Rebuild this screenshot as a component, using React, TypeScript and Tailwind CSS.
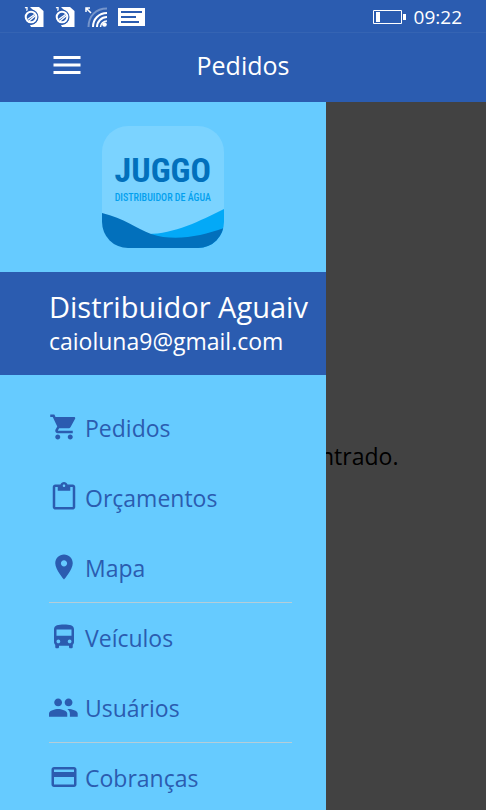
import type { ReactNode } from "react";

function Glyph({ viewBox, children }: { viewBox: string; children: ReactNode }) {
  return (
    <svg viewBox={viewBox} className="mb-[2px] size-[30px] shrink-0 fill-current" aria-hidden="true">
      {children}
    </svg>
  );
}

const items = [
  {
    label: "Pedidos",
    divider: false,
    viewBox: "0 0 24 24",
    path: "M7 18c-1.1 0-1.99.9-1.99 2S5.9 22 7 22s2-.9 2-2-.9-2-2-2zM1 2v2h2l3.6 7.59-1.35 2.45c-.16.28-.25.61-.25.96 0 1.1.9 2 2 2h12v-2H7.42c-.14 0-.25-.11-.25-.25l.03-.12.9-1.63h7.45c.75 0 1.41-.41 1.75-1.03l3.58-6.49c.08-.14.12-.31.12-.48 0-.55-.45-1-1-1H5.21l-.94-2H1zm16 16c-1.1 0-1.99.9-1.99 2s.89 2 1.99 2 2-.9 2-2-.9-2-2-2z",
  },
  {
    label: "Orçamentos",
    divider: false,
    viewBox: "0 0 24 24",
    path: "M19 2h-4.18C14.4.84 13.3 0 12 0c-1.3 0-2.4.84-2.82 2H5c-1.1 0-2 .9-2 2v16c0 1.1.9 2 2 2h14c1.1 0 2-.9 2-2V4c0-1.1-.9-2-2-2zm-7 0c.55 0 1 .45 1 1s-.45 1-1 1-1-.45-1-1 .45-1 1-1zm7 18H5V4h2v3h10V4h2v16z",
  },
  {
    label: "Mapa",
    divider: true,
    viewBox: "0 0 24 24",
    path: "M12 2C8.13 2 5 5.13 5 9c0 5.25 7 13 7 13s7-7.75 7-13c0-3.87-3.13-7-7-7zm0 9.500c-1.38 0-2.500-1.120-2.500-2.500s1.120-2.500 2.500-2.500 2.500 1.120 2.500 2.500-1.120 2.500-2.500 2.500z",
  },
  {
    label: "Veículos",
    divider: false,
    viewBox: "0 0 24 24",
    path: "M4 16c0 .88.39 1.67 1 2.22V20c0 .55.45 1 1 1h1c.55 0 1-.45 1-1v-1h8v1c0 .55.45 1 1 1h1c.55 0 1-.45 1-1v-1.780c.61-.55 1-1.340 1-2.220V6c0-3.500-3.580-4-8-4s-8 .500-8 4v10zm3.500 1c-.83 0-1.500-.67-1.500-1.500S6.670 14 7.500 14s1.500.67 1.500 1.500S8.330 17 7.500 17zm9 0c-.83 0-1.500-.67-1.500-1.500s.67-1.500 1.500-1.500 1.500.67 1.500 1.500-.67 1.500-1.500 1.500zm1.500-6H6V6h12v5z",
  },
  {
    label: "Usuários",
    divider: true,
    viewBox: "1 0 23 23",
    path: "M16 11c1.660 0 2.990-1.340 2.990-3S17.660 5 16 5c-1.660 0-3 1.340-3 3s1.340 3 3 3zm-8 0c1.660 0 2.990-1.340 2.990-3S9.660 5 8 5C6.340 5 5 6.340 5 8s1.340 3 3 3zm0 2c-2.330 0-7 1.170-7 3.500V19h14v-2.500c0-2.330-4.670-3.500-7-3.500zm8 0c-.29 0-.62.02-.97.05 1.160.84 1.970 1.970 1.970 3.450V19h6v-2.500c0-2.330-4.670-3.500-7-3.500z",
  },
  {
    label: "Cobranças",
    divider: false,
    viewBox: "0 0 24 24",
    path: "M20 4H4c-1.110 0-1.990.89-1.990 2L2 18c0 1.110.89 2 2 2h16c1.110 0 2-.89 2-2V6c0-1.110-.89-2-2-2zm0 14H4v-6h16v6zm0-10H4V6h16v2z",
  },
];

function SimIcon() {
  return (
    <svg viewBox="0 0 20 20" className="size-5" aria-hidden="true">
      <path d="M6 0h9l4.500 4v16H7l-1-2c8 0 11-9 4-14z" fill="white" />
      <path d="M1 1l2-1v4" fill="none" stroke="white" strokeWidth="1.300" />
      <circle cx="7" cy="10" r="7.500" fill="#2b5cb0" />
      <circle cx="7" cy="10" r="5.300" fill="none" stroke="white" strokeWidth="2" />
      <path d="M3.500 12.500l7-5M5 14l6-5" stroke="white" strokeWidth="1.300" />
    </svg>
  );
}

function StatusBar() {
  return (
    <div className="flex h-[33px] items-center justify-between border-b border-[#3564b3] pt-[2px] pr-6 pl-6 text-white">
      <div className="flex items-center">
        <SimIcon />
        <span className="w-[11px]" />
        <SimIcon />
        <svg viewBox="0 0 23 20" className="ml-[10px] h-5 w-[23px]" fill="none" stroke="white" aria-hidden="true">
          <path d="M1 5V1h4M1 1l5 5" strokeWidth="1.500" />
          <path d="M3.500 20C3.500 9 11 1.500 22 1.500" strokeWidth="2" opacity=".35" />
          <path d="M8 20C8 12 14 6 22 6M12 20c0-5.500 4.500-10 10-10" strokeWidth="2" />
          <path d="M15.500 20c0-3.500 3-6 6.500-6" strokeWidth="1.500" />
          <circle cx="19.500" cy="17.500" r="2.300" fill="white" stroke="none" />
        </svg>
        <svg viewBox="0 0 27 18" className="ml-[10px] h-[18px] w-[27px]" aria-hidden="true">
          <path d="M0 0h27v18H0z" fill="white" />
          <path d="M3 4h21M3 9h15M3 14h18" stroke="#2b5cb0" strokeWidth="2" />
        </svg>
      </div>
      <div className="flex items-center gap-2">
        <svg viewBox="0 0 33 14" className="h-[14px] w-[33px]" aria-hidden="true">
          <path d="M.5.500h28v13H.5z" fill="none" stroke="white" />
          <path d="M3 2h4v10H3zM30 4h3v6h-3z" fill="white" />
        </svg>
        <span className="text-[19px] leading-6">09:22</span>
      </div>
    </div>
  );
}

function Logo() {
  return (
    <div className="relative h-[122px] w-[122px] overflow-hidden rounded-[26px] bg-[#7bd3ff]">
      <svg viewBox="0 0 122 122" className="absolute inset-0 size-full" aria-hidden="true">
        <path d="M46 108C72 108 98 95 122 83v39H60z" fill="#03a9f7" />
        <path d="M0 87c22 5 35 16 49 21 24 8 50 2 73-6v20H0z" fill="#0270bc" />
      </svg>
      <div className="relative flex flex-col items-center pt-6 text-center font-['Roboto_Condensed','Roboto',sans-serif] font-bold whitespace-nowrap">
        <span className="text-[34px] leading-10 text-[#0270bc]">JUGGO</span>
        <span className="text-[10px] leading-4 font-medium text-[#03a0ee]">DISTRIBUIDOR DE ÁGUA</span>
      </div>
    </div>
  );
}

export default function App() {
  return (
    <div className="flex min-h-screen flex-col bg-white font-['Open_Sans','Noto_Sans',sans-serif]">
      <div className="bg-[#2b5cb0]">
        <StatusBar />
        <header className="grid h-[69px] grid-cols-[1fr_auto_1fr] items-center pb-[5px] text-white">
          <button type="button" aria-label="Menu" className="ml-[49px] w-9 justify-self-start">
            <svg viewBox="0 0 24 24" className="size-9 fill-current" aria-hidden="true">
              <path d="M3 18h18v-2H3v2zm0-5h18v-2H3v2zm0-7v2h18V6H3z" />
            </svg>
          </button>
          <h1 className="text-[25px] leading-8">Pedidos</h1>
        </header>
      </div>
      <main className="relative flex flex-1 flex-col">
        <p className="absolute inset-0 flex items-center justify-center pb-1 text-[23px] leading-6 text-black">
          Nenhum pedido encontrado.
        </p>
        <div className="absolute inset-0 bg-black/74" />
        <aside className="relative w-[67%] flex-1 bg-[#66cbff]">
          <div className="flex h-[170px] items-center justify-center">
            <Logo />
          </div>
          <div className="flex h-[103px] flex-col justify-center bg-[#2b5cb0] pb-[2px] pl-[49px] whitespace-nowrap text-white">
            <p className="text-[29px] leading-9">Distribuidor Aguaiv</p>
            <p className="text-[23px] leading-8">caioluna9@gmail.com</p>
          </div>
          <nav className="pt-[18px] pr-[34px] pl-[49px]">
            <ul>
              {items.map((item) => (
                <li
                  key={item.label}
                  className={item.divider ? "h-[70px] border-b border-[#b5cdd8]" : "h-[70px]"}
                >
                  <a href="#" className="flex h-[70px] items-center gap-[6px] text-[23px] leading-6 text-[#2b5cb0]">
                    <Glyph viewBox={item.viewBox}>
                      <path d={item.path} />
                    </Glyph>
                    {item.label}
                  </a>
                </li>
              ))}
            </ul>
          </nav>
        </aside>
      </main>
    </div>
  );
}
